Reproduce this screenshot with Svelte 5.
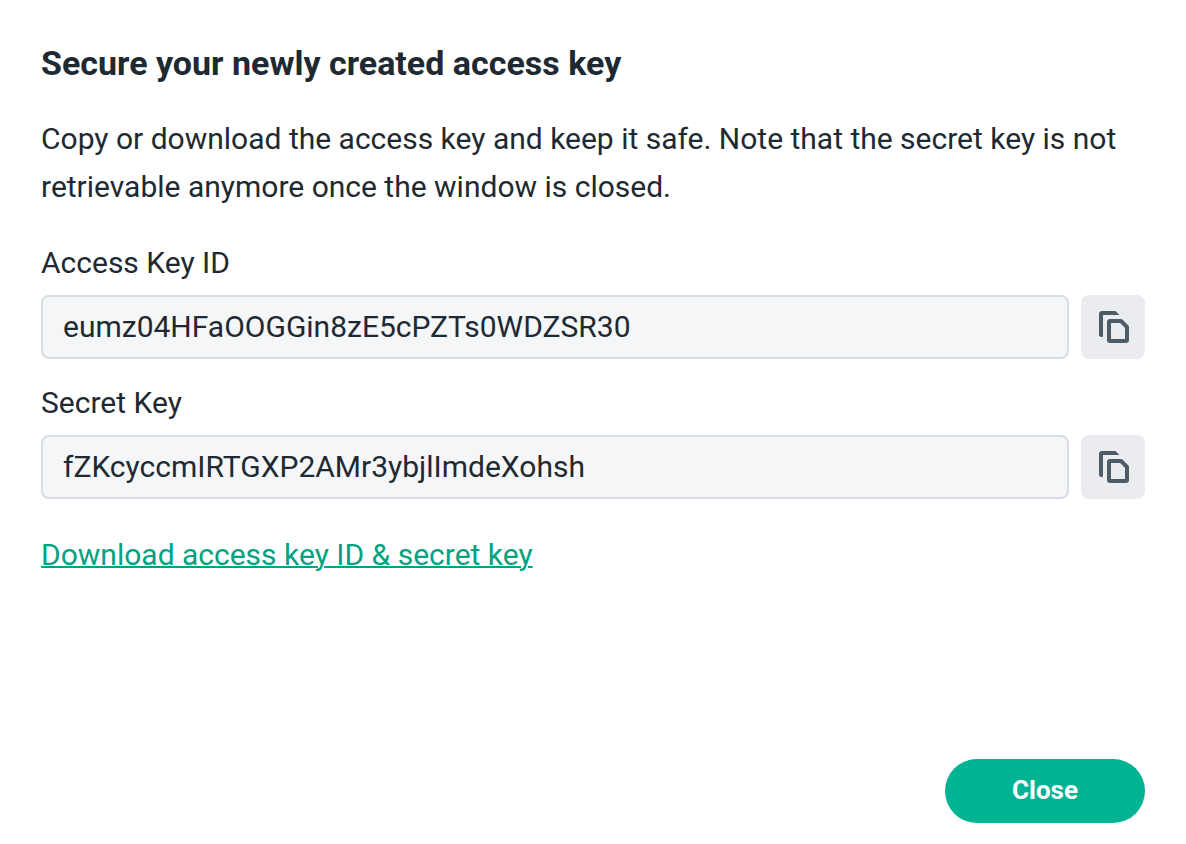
<script lang="ts">
  let keys = [
    { id: "access-key", label: "Access Key ID", value: "eumz04HFaOOGGin8zE5cPZTs0WDZSR30" },
    { id: "secret-key", label: "Secret Key", value: "fZKcyccmIRTGXP2AMr3ybjlImdeXohsh" },
  ];

  function copy(value: string) {
    navigator.clipboard?.writeText(value);
  }
</script>

<main class="dialog">
  <h1>Secure your newly created access key</h1>
  <p>
    Copy or download the access key and keep it safe. Note that the secret key is not
    retrievable anymore once the window is closed.
  </p>

  {#each keys as key}
    <div class="field">
      <label for={key.id}>{key.label}</label>
      <div class="field-row">
        <input id={key.id} type="text" readonly value={key.value} />
        <button class="copy" aria-label={`Copy ${key.label}`} on:click={() => copy(key.value)}>
          <svg width="32" height="32" viewBox="0 0 32 32">
            <path fill="#4e5c66" d="M5 0h13.5L22.5 4H6v21q0 1-1 1H4q-2-.3-2-2V3q0-3 3-3z" />
            <path
              fill="none"
              stroke="#4e5c66"
              stroke-width="4"
              stroke-linejoin="round"
              d="M13 10h11l6 6v13a1 1 0 0 1-1 1H13a1 1 0 0 1-1-1V11a1 1 0 0 1 1-1z"
            />
          </svg>
        </button>
      </div>
    </div>
  {/each}

  <a class="download" href="#download">Download access key ID &amp; secret key</a>

  <footer>
    <button class="close">Close</button>
  </footer>
</main>

<style>
  :global(body) {
    background: #ffffff;
  }

  .dialog {
    box-sizing: border-box;
    display: flex;
    flex-direction: column;
    min-height: 100vh;
    padding: 39px 41px 21px;
    font-family: Roboto, sans-serif;
    font-size: 30px;
    line-height: 48px;
    color: #1e2932;
  }

  h1 {
    margin: 0 0 28px;
    font-size: 34px;
    line-height: 48px;
    font-weight: 700;
  }

  p {
    margin: 0 0 28px;
  }

  .field {
    margin-bottom: 20px;
  }

  label {
    display: block;
    margin-bottom: 8px;
  }

  .field-row {
    display: flex;
    gap: 12px;
  }

  input {
    box-sizing: border-box;
    flex: 1;
    min-width: 0;
    height: 64px;
    padding: 0 20px 2px;
    border: 2px solid #d7dce3;
    border-radius: 8px;
    background: #f5f6f8;
    font: inherit;
    color: inherit;
  }

  button {
    border: 0;
    font: inherit;
    cursor: pointer;
  }

  .copy {
    display: flex;
    align-items: center;
    justify-content: center;
    width: 64px;
    height: 64px;
    padding: 0;
    border-radius: 8px;
    background: #ebecf0;
  }

  .download {
    align-self: flex-start;
    margin-top: 12px;
    color: #00a380;
    text-decoration-thickness: 2px;
  }

  footer {
    display: flex;
    justify-content: flex-end;
    margin-top: auto;
  }

  .close {
    width: 200px;
    height: 64px;
    padding: 0 0 2px;
    border-radius: 32px;
    background: #00b393;
    font-size: 26px;
    font-weight: 700;
    color: #ffffff;
  }
</style>
